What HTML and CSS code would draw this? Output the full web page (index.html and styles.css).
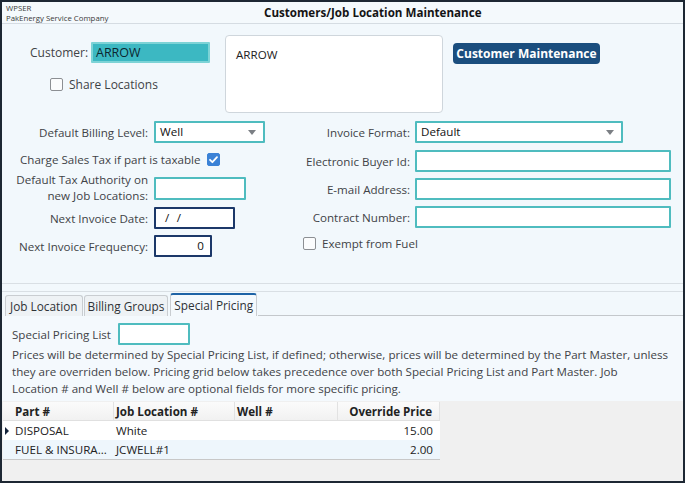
FILE: index.html
```html
<!DOCTYPE html>
<html>
<head>
<meta charset="utf-8">
<link rel="stylesheet" href="styles.css">
</head>
<body>
<div class="window">
  <header class="titlebar">
    <div class="app-info"><div>WPSER</div><div>PakEnergy Service Company</div></div>
    <div class="title">Customers/Job Location Maintenance</div>
  </header>

  <section class="top">
    <div class="cust-col">
      <div class="cust-row"><span class="cust-label">Customer:</span><div class="input filled">ARROW</div></div>
      <div class="check share"><span class="box"></span><span>Share Locations</span></div>
    </div>
    <div class="listbox">ARROW</div>
    <div class="btn">Customer Maintenance</div>
  </section>

  <section class="form">
    <div class="col left">
      <div class="row r1"><span class="lbl">Default Billing Level:</span><div class="input select w111">Well<span class="arrow"></span></div></div>
      <div class="row r2"><span class="lbl wide">Charge Sales Tax if part is taxable</span><span class="box checked"><svg viewBox="0 0 13 13" width="13" height="13"><path d="M3 6.8 L5.4 9.2 L10 4.2" fill="none" stroke="#fff" stroke-width="1.8" stroke-linecap="round" stroke-linejoin="round"/></svg></span></div>
      <div class="row r3"><span class="lbl two">Default Tax Authority on<br>new Job Locations:</span><div class="input w92"></div></div>
      <div class="row r4"><span class="lbl">Next Invoice Date:</span><div class="input navy w81 date">/&nbsp;&nbsp;/</div></div>
      <div class="row r5"><span class="lbl">Next Invoice Frequency:</span><div class="input navy w58 num">0</div></div>
    </div>
    <div class="col right">
      <div class="row q1"><span class="lbl">Invoice Format:</span><div class="input select w208">Default<span class="arrow"></span></div></div>
      <div class="row q2"><span class="lbl">Electronic Buyer Id:</span><div class="input w256"></div></div>
      <div class="row q3"><span class="lbl">E-mail Address:</span><div class="input w256"></div></div>
      <div class="row q4"><span class="lbl">Contract Number:</span><div class="input w256"></div></div>
      <div class="row q5"><div class="check"><span class="box"></span><span>Exempt from Fuel</span></div></div>
    </div>
  </section>

  <div class="sep"></div>

  <nav class="tabs">
    <div class="tab first">Job Location</div>
    <div class="tab">Billing Groups</div>
    <div class="tab active">Special Pricing</div>
    <div class="tab-fill"></div>
  </nav>

  <section class="panel">
    <div class="spl-row"><span>Special Pricing List</span><div class="input w72"></div></div>
    <p class="note">Prices will be determined by Special Pricing List, if defined; otherwise, prices will be determined by the Part Master, unless<br>they are overriden below. Pricing grid below takes precedence over both Special Pricing List and Part Master. Job<br>Location # and Well # below are optional fields for more specific pricing.</p>
  </section>

  <section class="grid">
    <div class="table">
      <div class="tr head">
        <div class="td c1">Part #</div>
        <div class="td c2">Job Location #</div>
        <div class="td c3">Well #</div>
        <div class="td c4">Override Price</div>
      </div>
      <div class="tr">
        <div class="td c1"><span class="ind"></span>DISPOSAL</div>
        <div class="td c2">White</div>
        <div class="td c3"></div>
        <div class="td c4">15.00</div>
      </div>
      <div class="tr alt">
        <div class="td c1">FUEL &amp; INSURA...</div>
        <div class="td c2">JCWELL#1</div>
        <div class="td c3"></div>
        <div class="td c4">2.00</div>
      </div>
    </div>
  </section>
</div>
</body>
</html>
```

FILE: styles.css
```css
* { box-sizing: border-box; }
html, body { margin: 0; padding: 0; }
body {
  width: 685px; height: 483px; overflow: hidden;
  font-family: "Open Sans", "Noto Sans", sans-serif;
  font-size: 11.6px; color: #3f4347; background: #1d2733;
}
.window {
  width: 685px; height: 483px;
  border: 2px solid #1d2733;
  background: #f2f8fc;
  display: flex; flex-direction: column;
  overflow: hidden;
}
.titlebar {
  height: 22px; flex: none;
  border-bottom: 1px solid #d5dce2;
  display: flex;
  background: #f4f9fc;
}
.app-info {
  width: 262px; flex: none;
  font-size: 7.8px; line-height: 10px;
  padding: 1px 0 0 4px; color: #3a3a3a;
}
.title { font-weight: 700; color: #141414; padding-top: 3px; font-size: 11.6px; }

.top { display: flex; align-items: flex-start; height: 90px; flex: none; padding-top: 11px; }
.cust-col { width: 223px; flex: none; padding: 7px 0 0 28px; }
.cust-row { display: flex; align-items: center; height: 21px; }
.cust-label { width: 61px; flex: none; font-size: 12px; }
.input {
  height: 22px; border: 2px solid #4fbcbf; background: #fff; border-radius: 1px;
  color: #111; padding: 0 4px; line-height: 18px; flex: none;
}
.input.filled { width: 119px; height: 21px; background: #3cb8c2; border-color: #7dd3d6; color: #0c2630; line-height: 17px; padding-left: 3px; font-size: 12.5px; }
.check { display: flex; align-items: center; gap: 6px; }
.share { margin: 13px 0 0 20px; font-size: 12px; }
.box {
  width: 13px; height: 13px; flex: none; border: 1px solid #8c8f93; border-radius: 2px; background: #fbfcfd;
  display: inline-flex;
}
.box.checked { background: #3b82d6; border-color: #3b82d6; margin-left: 7px; }
.box svg { display: block; margin: -1px; }
.listbox {
  width: 218px; height: 78px; flex: none;
  background: #fff; border: 1px solid #cfd6dc; border-radius: 4px;
  padding: 11px 10px; color: #222;
}
.btn {
  margin: 8px 0 0 10px; width: 147px; height: 21px;
  background: #1b4e7e; color: #fff; font-weight: 700; font-size: 12px;
  border-radius: 4px; text-align: center; line-height: 21px;
}

.form { display: flex; height: 168px; flex: none; padding-top: 7px; }
.col { display: flex; flex-direction: column; }
.left { width: 288px; flex: none; }
.right { flex: 1; }
.row { display: flex; align-items: center; }
.left .lbl { width: 152px; text-align: right; padding-right: 6px; flex: none; }
.right .lbl { width: 125px; text-align: right; padding-right: 5px; flex: none; }
.lbl.wide { width: auto !important; padding-left: 18px; text-align: left !important; white-space: nowrap; padding-right: 0 !important; }
.lbl.two { line-height: 16px; }
.r1 { height: 22px; }
.r2 { height: 18px; margin-top: 7px; }
.r3 { height: 32px; margin-top: 4px; }
.r4 { height: 22px; margin-top: 3px; }
.r5 { height: 22px; margin-top: 6px; }
.q1 { height: 22px; }
.q2 { height: 22px; margin-top: 7px; }
.q3 { height: 22px; margin-top: 6px; }
.q4 { height: 22px; margin-top: 6px; }
.q5 { height: 16px; margin-top: 7px; padding-left: 13px; }
.w111 { width: 111px; }
.w92 { width: 92px; height: 23px; }
.w81 { width: 81px; }
.w58 { width: 58px; }
.w208 { width: 208px; }
.w256 { width: 256px; }
.w72 { width: 72px; }
.select { position: relative; }
.arrow {
  position: absolute; right: 7px; top: 7px;
  border-left: 4px solid transparent; border-right: 4px solid transparent; border-top: 5px solid #7b7f84;
}
.navy { border-color: #1c3869; }
.date { padding-left: 9px; letter-spacing: 0.5px; }
.num { text-align: right; padding-right: 6px; }

.sep { height: 9px; flex: none; border-top: 1px solid #d9dfe4; border-bottom: 1px solid #d9dfe4; margin-top: 1px; }

.tabs { display: flex; align-items: flex-end; height: 24px; flex: none; padding-left: 3px; }
.tab {
  height: 21px; padding: 0 3px; margin-right: 1px;
  border: 1px solid #c9cdd1; border-bottom: none; border-radius: 3px 3px 0 0;
  background: #eef2f5; color: #2e3236; line-height: 20px; font-size: 11.8px;
}
.tab.first { padding: 0 4px; }
.tab.active { height: 23px; background: #f4f9fd; border-top: 2px solid #1e63a6; line-height: 20px; margin-left: 1px; }
.tab-fill { flex: 1; border-bottom: 1px solid #c4c8cc; height: 1px; }

.panel { height: 85px; flex: none; padding: 7px 0 0 10px; background: #f4f9fd; }
.spl-row { display: flex; align-items: center; gap: 0; }
.spl-row span { width: 106px; }
.note { margin: 1px 0 0 0; line-height: 17px; white-space: nowrap; }

.grid { flex: 1; background: #f0f0f0; padding: 1px 0 0 1px; }
.table { width: 437px; border-bottom: 1px solid #c8c8c8; }
.tr { display: flex; height: 19px; background: #fff; }
.tr.alt { background: #eef6fc; }
.tr.head { height: 19px; background: linear-gradient(#fbfbfb, #f1f1f1); font-weight: 700; color: #1c1c1c; border-bottom: 1px solid #e0e0e0; }
.td { line-height: 19px; padding-left: 2px; white-space: nowrap; overflow: hidden; position: relative; color: #222; }
.head .td { border-right: 1px solid #e2e2e2; }
.c1 { width: 111px; padding-left: 12px; }
.c2 { width: 121px; }
.c3 { width: 103px; }
.c4 { width: 102px; text-align: right; padding-right: 7px; }
.ind {
  position: absolute; left: 2px; top: 6px;
  border-top: 4px solid transparent; border-bottom: 4px solid transparent; border-left: 4px solid #14233a;
}
```
